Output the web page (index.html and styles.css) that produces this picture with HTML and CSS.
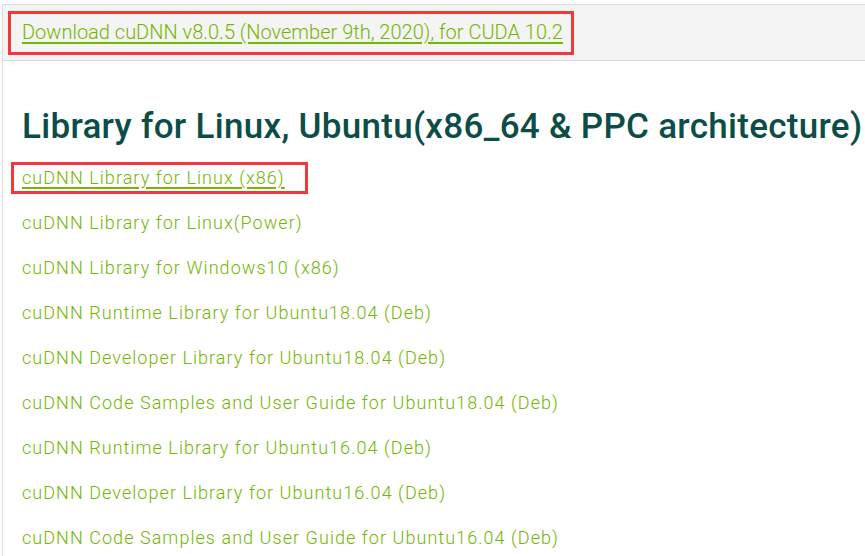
FILE: index.html
```html
<!DOCTYPE html>
<html>
<head>
<meta charset="utf-8">
<link rel="stylesheet" href="styles.css">
</head>
<body>
<div class="page">
  <div class="header">
    <div class="mark mark-top"><a class="link link-lg underline" href="#">Download cuDNN v8.0.5 (November 9th, 2020), for CUDA 10.2</a></div>
  </div>
  <div class="content">
    <h2 class="title">Library for Linux, Ubuntu(x86_64 &amp; PPC architecture)</h2>
    <ul class="list">
      <li class="item"><span class="mark mark-item"><a class="link underline" href="#">cuDNN Library for Linux (x86)</a></span></li>
      <li class="item"><a class="link" href="#">cuDNN Library for Linux(Power)</a></li>
      <li class="item"><a class="link" href="#">cuDNN Library for Windows10 (x86)</a></li>
      <li class="item"><a class="link" href="#">cuDNN Runtime Library for Ubuntu18.04 (Deb)</a></li>
      <li class="item"><a class="link" href="#">cuDNN Developer Library for Ubuntu18.04 (Deb)</a></li>
      <li class="item"><a class="link" href="#">cuDNN Code Samples and User Guide for Ubuntu18.04 (Deb)</a></li>
      <li class="item"><a class="link" href="#">cuDNN Runtime Library for Ubuntu16.04 (Deb)</a></li>
      <li class="item"><a class="link" href="#">cuDNN Developer Library for Ubuntu16.04 (Deb)</a></li>
      <li class="item"><a class="link" href="#">cuDNN Code Samples and User Guide for Ubuntu16.04 (Deb)</a></li>
    </ul>
  </div>
</div>
</body>
</html>
```
FILE: styles.css
```css
html, body {
  margin: 0;
  padding: 0;
  background: #ffffff;
  font-family: Roboto, "Liberation Sans", sans-serif;
  overflow: hidden;
}
.page {
  margin: 4px 0 0 2px;
  border-top: 1px solid #dcdcdc;
  border-left: 1px solid #dcdcdc;
  height: 560px;
}
.header {
  background: #f4f4f4;
  height: 56px;
  border-bottom: 1px solid #dcdcdc;
  padding: 6px 0 0 5px;
  box-sizing: border-box;
}
.mark {
  border: 3px solid #f2383d;
  box-sizing: border-box;
}
.mark-top {
  display: inline-flex;
  align-items: center;
  width: 566px;
  height: 44px;
  padding: 0 0 3px 11px;
}
.link {
  color: #74b600;
  text-decoration: none;
  font-size: 18px;
  font-weight: 300;
  letter-spacing: 1.05px;
  white-space: nowrap;
}
.link-lg {
  font-size: 20px;
  letter-spacing: 0;
}
.underline {
  text-decoration: underline;
  text-underline-offset: 3px;
  text-decoration-thickness: 2px;
}
.content {
  padding-left: 19px;
}
.title {
  margin: 44px 0 0 0;
  font-size: 35px;
  font-weight: 500;
  line-height: 44px;
  letter-spacing: 0.3px;
  color: #0c4d48;
}
.list {
  list-style: none;
  margin: 6px 0 0 0;
  padding: 0;
}
.item {
  height: 45px;
  display: flex;
  align-items: center;
}
.mark-item {
  display: inline-flex;
  align-items: center;
  height: 32px;
  margin-left: -11px;
  padding: 0 20px 0 8px;
}
```
